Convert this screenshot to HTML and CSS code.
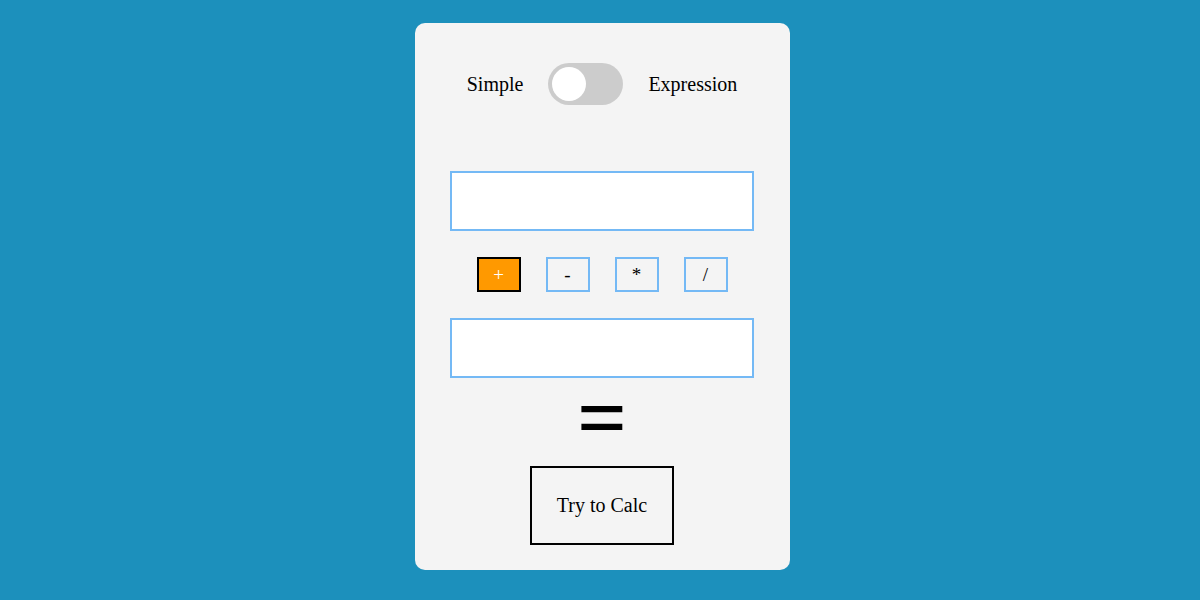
FILE: index.html
```html
<!DOCTYPE html>
<html>
<head>
<meta charset="utf-8">
<link rel="stylesheet" href="styles.css">
</head>
<body>
<div class="card">
  <div class="mode-row">
    <span class="mode-label">Simple</span>
    <div class="switch"><div class="knob"></div></div>
    <span class="mode-label">Expression</span>
  </div>
  <div class="field field-first"></div>
  <div class="ops">
    <div class="op op-active">+</div>
    <div class="op">-</div>
    <div class="op">*</div>
    <div class="op">/</div>
  </div>
  <div class="field"></div>
  <div class="equals">=</div>
  <div class="calc-btn">Try to Calc</div>
</div>
</body>
</html>
```
FILE: styles.css
```css
html, body {
  margin: 0;
  padding: 0;
}
body {
  background: #1c90bc;
  font-family: "Liberation Serif", "Times New Roman", serif;
  color: #000;
  width: 1200px;
  height: 600px;
  overflow: hidden;
}
.card {
  width: 375px;
  height: 547px;
  box-sizing: border-box;
  margin: 23px 0 0 415px;
  background: #f4f4f4;
  border-radius: 10px;
  padding-top: 40px;
  padding-right: 1px;
  display: flex;
  flex-direction: column;
  align-items: center;
}
.mode-row {
  display: flex;
  align-items: center;
  gap: 25px;
  height: 42px;
}
.mode-label {
  font-size: 20px;
}
.switch {
  width: 75px;
  height: 42px;
  border-radius: 21px;
  background: #cccccc;
  display: flex;
  align-items: center;
  padding-left: 4px;
  box-sizing: border-box;
}
.knob {
  width: 34px;
  height: 34px;
  border-radius: 50%;
  background: #fff;
}
.field {
  width: 304px;
  height: 60px;
  box-sizing: border-box;
  border: 2px solid #74b9f5;
  background: #fff;
}
.field-first {
  margin-top: 66px;
}
.ops {
  display: flex;
  gap: 25px;
  margin: 26px 0;
}
.op {
  width: 44px;
  height: 35px;
  box-sizing: border-box;
  border: 2px solid #74b9f5;
  display: flex;
  align-items: center;
  justify-content: center;
  font-size: 19px;
}
.op-active {
  background: #ff9900;
  border-color: #000;
  color: #fff;
}
.equals {
  height: 88px;
  display: flex;
  align-items: center;
  justify-content: center;
  font-size: 88px;
  font-weight: bold;
  line-height: 1;
  padding-bottom: 6px;
  box-sizing: border-box;
}
.calc-btn {
  width: 144px;
  height: 79px;
  box-sizing: border-box;
  border: 2px solid #000;
  display: flex;
  align-items: center;
  justify-content: center;
  font-size: 20px;
}
```
